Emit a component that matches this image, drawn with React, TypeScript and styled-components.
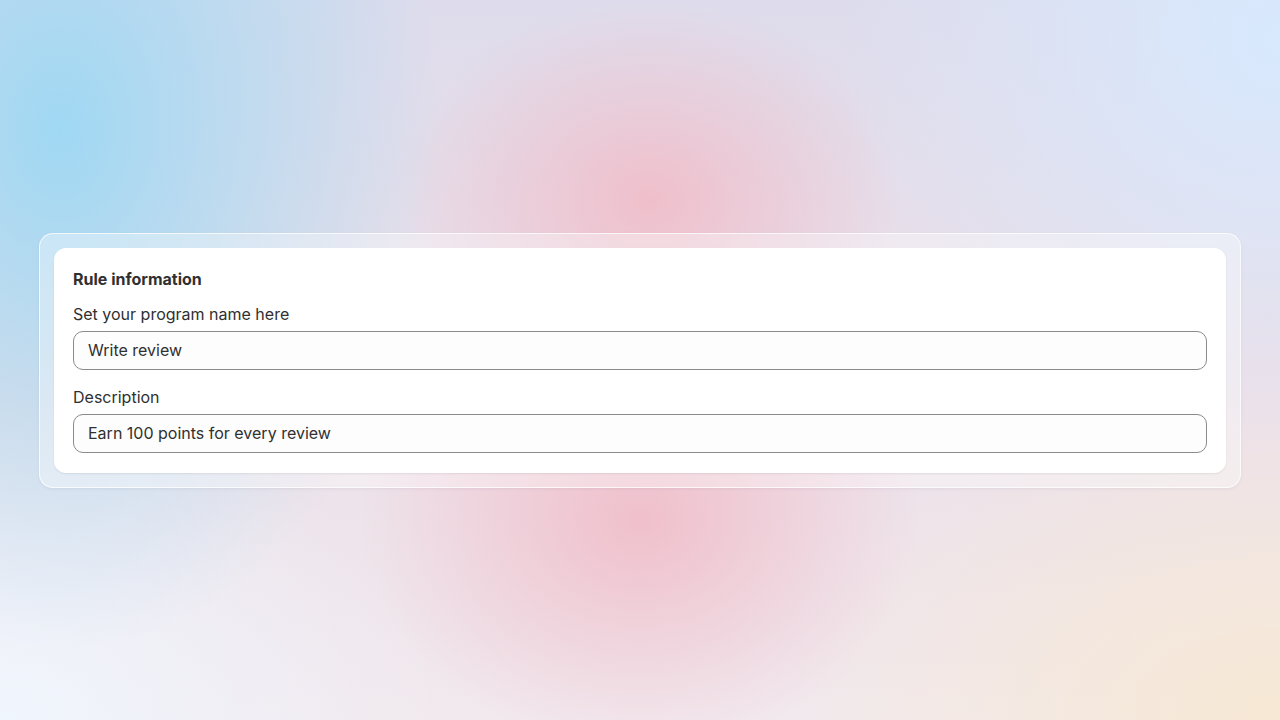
import React from "react";
import styled, { createGlobalStyle } from "styled-components";

const GlobalStyle = createGlobalStyle`
  html, body {
    margin: 0;
    padding: 0;
  }
  body {
    font-family: Inter, "Noto Sans", "Liberation Sans", sans-serif;
    -webkit-font-smoothing: antialiased;
  }
`;

const fields = [
  { label: "Set your program name here", value: "Write review" },
  { label: "Description", value: "Earn 100 points for every review" },
];

const App = () => {
  return (
    <>
      <GlobalStyle />
      <Page>
        <Frame>
          <Card>
            <Title>Rule information</Title>
            <Fields>
              {fields.map((f) => (
                <Field key={f.label}>
                  <Label>{f.label}</Label>
                  <Input defaultValue={f.value} />
                </Field>
              ))}
            </Fields>
          </Card>
        </Frame>
      </Page>
    </>
  );
};

export default App;

const Page = styled.div`
  width: 100vw;
  height: 100vh;
  display: flex;
  align-items: center;
  justify-content: center;
  padding: 0 39px;
  box-sizing: border-box;
  background:
    radial-gradient(ellipse 250px 200px at 650px 200px, rgba(240, 188, 200, 0.9), rgba(240, 188, 200, 0) 100%),
    radial-gradient(ellipse 280px 230px at 640px 520px, rgba(240, 190, 202, 0.95), rgba(240, 190, 202, 0) 100%),
    radial-gradient(ellipse 380px 520px at 60px 130px, rgba(160, 216, 243, 1), rgba(160, 216, 243, 0) 100%),
    radial-gradient(ellipse 440px 400px at 1280px 40px, rgba(216, 233, 253, 1), rgba(216, 233, 253, 0) 100%),
    radial-gradient(ellipse 500px 320px at 1280px 720px, rgba(247, 232, 212, 1), rgba(247, 232, 212, 0) 100%),
    radial-gradient(ellipse 440px 320px at 0px 720px, rgba(240, 246, 254, 1), rgba(240, 246, 254, 0) 100%),
    linear-gradient(180deg, #dedcec 0%, #ebdfe8 50%, #f1e9ee 100%);
`;

const Frame = styled.div`
  width: 100%;
  padding: 14px;
  border-radius: 14px;
  background: rgba(255, 255, 255, 0.35);
  border: 1px solid rgba(255, 255, 255, 0.75);
  box-shadow: 0 1px 3px rgba(120, 120, 150, 0.12);
`;

const Card = styled.div`
  background: #ffffff;
  border-radius: 12px;
  padding: 20px 19px 20px;
  display: flex;
  flex-direction: column;
  gap: 13px;
  box-shadow: 0 1px 2px rgba(0, 0, 0, 0.08);
`;

const Title = styled.h2`
  margin: 0;
  font-size: 16px;
  font-weight: 650;
  color: #303030;
  line-height: 22px;
`;

const Fields = styled.div`
  display: flex;
  flex-direction: column;
  gap: 16px;
`;

const Field = styled.div`
  display: flex;
  flex-direction: column;
  gap: 6px;
`;

const Label = styled.label`
  font-size: 16px;
  color: #303030;
  line-height: 22px;
`;

const Input = styled.input`
  box-sizing: border-box;
  height: 39px;
  width: 100%;
  border: 1px solid #8a8a8a;
  border-radius: 10px;
  background: #fdfdfd;
  padding: 0 14px;
  font-family: inherit;
  font-size: 16px;
  color: #303030;
  outline: none;
`;
